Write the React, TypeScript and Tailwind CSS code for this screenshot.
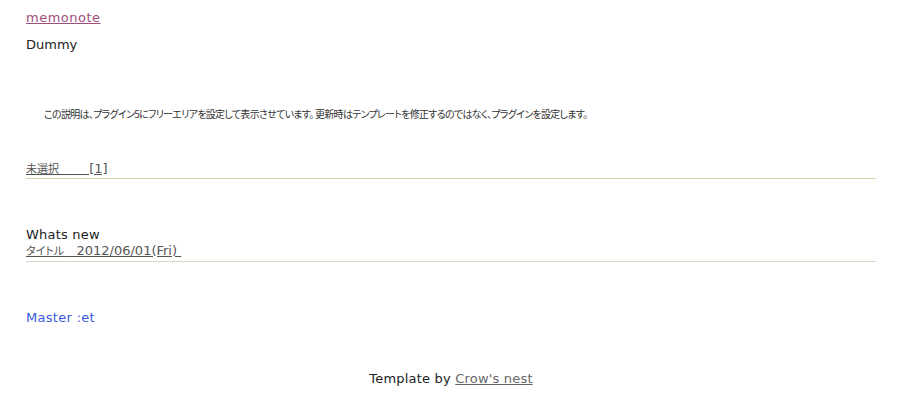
import React from "react";

export default function App() {
  return (
    <div className="min-h-[415px] bg-white font-['DejaVu_Sans','Noto_Sans_CJK_JP',sans-serif] text-[13px] leading-[16px] text-[#222]">
      <div className="ml-[26px] w-[850px] pt-[10px]">
        <div>
          <a href="#" className="text-[#a0507f] underline tracking-[0.5px]">memonote</a>
        </div>
        <div className="mt-[11px]">Dummy</div>
        <div className="mt-[54px] pl-[18px] text-[10px] leading-[14px] tracking-[-0.7px] text-[#333] font-['Noto_Sans_CJK_JP',sans-serif] [font-feature-settings:'palt']">
          この説明は、プラグイン5にフリーエリアを設定して表示させています。 更新時はテンプレートを修正するのではなく、プラグインを設定します。
        </div>
        <div className="mt-[40px] h-[18px] border-b border-[#d4d4a8]">
          <a href="#" className="text-[#555] underline whitespace-pre">
            <span className="text-[11px] leading-none font-['Noto_Sans_CJK_JP',sans-serif]">未選択</span>{"\u3000\u3000 [1]"}
          </a>
        </div>
        <div className="mt-[48px] tracking-[0.2px]">Whats new</div>
        <div className="h-[19px] border-b border-[#d6d6c4]">
          <a href="#" className="text-[#555] underline whitespace-pre">
            <span className="text-[11px] leading-none font-['Noto_Sans_CJK_JP',sans-serif] [font-feature-settings:'palt']">タイトル</span>{"   2012/06/01(Fri) "}
          </a>
        </div>
        <div className="mt-[48px] text-[#3a5ae0] tracking-[0.3px]">Master :et</div>
        <div className="mt-[45px] text-center tracking-[0.2px]">
          Template by <a href="#" className="text-[#666] underline">Crow's nest</a>
        </div>
      </div>
    </div>
  );
}
